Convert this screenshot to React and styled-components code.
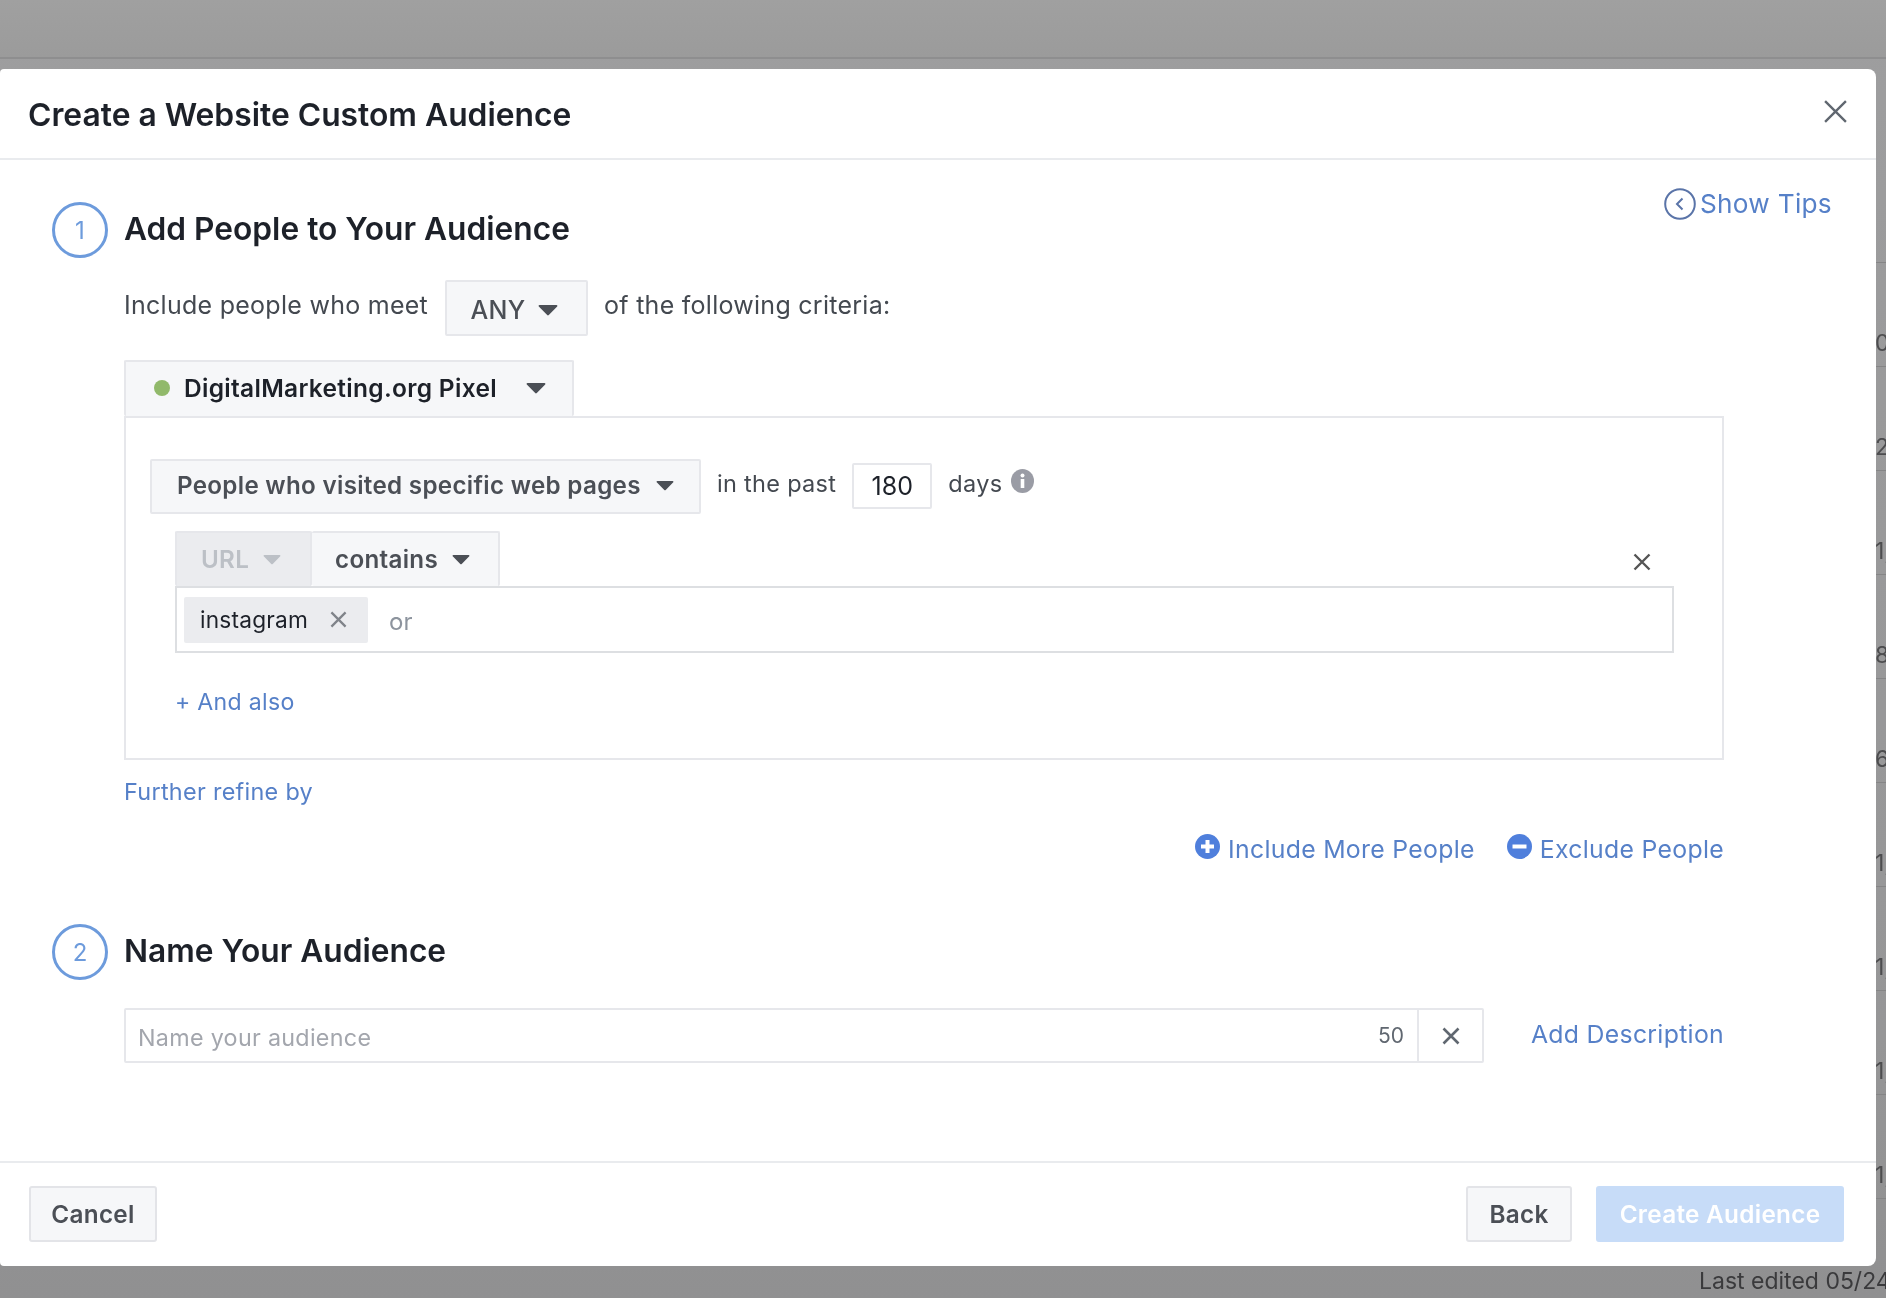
import React from 'react'
import styled, { createGlobalStyle } from 'styled-components'

const GlobalStyle = createGlobalStyle`
  html, body {
    margin: 0;
    padding: 0;
    background: #9a9a9b;
  }
  * { box-sizing: border-box; }
`

const rowValues = ['', '0,', '2,', '1,', '8,', '6,', '1,', '1,', '1,', '1,']

const Caret = ({ color = '#4b4f56', size = 20 }) => (
  <svg width={size} height={size * 0.6} viewBox='0 0 20 12'>
    <path d='M1.5 1h17c.8 0 1.2.9.7 1.5l-8.4 8.6c-.5.5-1.2.5-1.6 0L.8 2.5C.3 1.9.7 1 1.5 1z' fill={color} />
  </svg>
)

const Cross = ({ size = 18, color = '#606770', weight = 2.4 }) => (
  <svg width={size} height={size} viewBox='0 0 18 18'>
    <path d='M1.5 1.5l15 15M16.5 1.5l-15 15' stroke={color} strokeWidth={weight} fill='none' />
  </svg>
)

const App = () => (
  <Page>
    <GlobalStyle />
    <TopBar />
    <BackRows>
      {rowValues.map((value, i) => (
        <BackRow key={i}>{value}</BackRow>
      ))}
    </BackRows>
    <LastEdited>Last edited 05/24</LastEdited>

    <Modal>
      <Header>
        <Title>Create a Website Custom Audience</Title>
        <CloseButton>
          <Cross size={25} color='#606770' weight={1.7} />
        </CloseButton>
      </Header>

      <Body>
        <StepHead>
          <StepCircle>1</StepCircle>
          <StepTitle>Add People to Your Audience</StepTitle>
          <ShowTips>
            <svg width='32' height='32' viewBox='0 0 32 32'>
              <circle cx='16' cy='16' r='14.8' fill='none' stroke='#5a74a8' strokeWidth='2' />
              <path d='M18.5 10.5L13 16l5.5 5.5' fill='none' stroke='#5a74a8' strokeWidth='2' />
            </svg>
            Show Tips
          </ShowTips>
        </StepHead>

        <Content>
          <CriteriaRow>
            <span>Include people who meet</span>
            <AnyButton>
              ANY <Caret />
            </AnyButton>
            <span>of the following criteria:</span>
          </CriteriaRow>

          <PixelTab>
            <GreenDot />
            <span>DigitalMarketing.org Pixel</span>
            <Caret />
          </PixelTab>

          <Panel>
            <PeopleRow>
              <PeopleButton>
                <span>People who visited specific web pages</span>
                <Caret size={18} />
              </PeopleButton>
              <InlineText>in the past</InlineText>
              <DaysInput defaultValue='180' />
              <InlineText>days</InlineText>
              <InfoIcon viewBox='0 0 23 24' width='23' height='24'>
                <ellipse cx='11.5' cy='12' rx='11.5' ry='12' fill='#9a9ca5' />
                <circle cx='11.5' cy='6.5' r='2' fill='#fff' />
                <rect x='9.7' y='10' width='3.6' height='9' fill='#fff' />
              </InfoIcon>
            </PeopleRow>

            <Rule>
              <RuleTabs>
                <UrlTab>
                  URL <Caret color='#bcc0c6' size={18} />
                </UrlTab>
                <ContainsTab>
                  contains <Caret size={18} />
                </ContainsTab>
                <RuleRemove>
                  <Cross size={18} color='#555' weight={2.4} />
                </RuleRemove>
              </RuleTabs>
              <ValueBox>
                <Chip>
                  instagram
                  <Cross size={17} color='#7f8389' weight={2.4} />
                </Chip>
                <OrHint>or</OrHint>
              </ValueBox>
            </Rule>

            <AndAlso>+ And also</AndAlso>
          </Panel>

          <FurtherRefine>Further refine by</FurtherRefine>

          <Actions>
            <ActionLink>
              <svg width='25' height='25' viewBox='0 0 25 25'>
                <circle cx='12.5' cy='12.5' r='12.5' fill='#4f7fdc' />
                <path d='M12.5 6v13M6 12.5h13' stroke='#fff' strokeWidth='4' />
              </svg>
              Include More People
            </ActionLink>
            <ActionLink>
              <svg width='25' height='25' viewBox='0 0 25 25'>
                <circle cx='12.5' cy='12.5' r='12.5' fill='#4f7fdc' />
                <path d='M5.5 12.5h14' stroke='#fff' strokeWidth='4' />
              </svg>
              Exclude People
            </ActionLink>
          </Actions>
        </Content>

        <StepHead $second>
          <StepCircle>2</StepCircle>
          <StepTitle>Name Your Audience</StepTitle>
        </StepHead>

        <Content>
          <NameRow>
            <NameField>
              <NameInput placeholder='Name your audience' />
              <Counter>50</Counter>
              <NameClear>
                <Cross size={18} color='#606770' weight={2.6} />
              </NameClear>
            </NameField>
            <AddDescription>Add Description</AddDescription>
          </NameRow>
        </Content>
      </Body>

      <Footer>
        <Button $width='128px'>Cancel</Button>
        <FooterRight>
          <Button $width='106px'>Back</Button>
          <PrimaryButton>Create Audience</PrimaryButton>
        </FooterRight>
      </Footer>
    </Modal>
  </Page>
)

export default App

const Page = styled.div`
  position: relative;
  width: 1886px;
  height: 1298px;
  overflow: hidden;
  background: linear-gradient(#9e9e9f, #9a9a9b 30%, #969697 80%, #909091);
  font-family: Inter, 'Noto Sans', sans-serif;
  -webkit-font-smoothing: antialiased;
  filter: blur(0.5px);
`

const TopBar = styled.div`
  height: 59px;
  background: linear-gradient(#a0a0a0, #9b9b9b);
  border-bottom: 2px solid #8e8e8f;
`

const BackRows = styled.div`
  margin-top: 100px;
`

const BackRow = styled.div`
  height: 104px;
  padding: 65px 0 0 1875px;
  border-bottom: 1px solid #858586;
  color: #4d4d4f;
  font-size: 23px;
  line-height: 30px;
  white-space: nowrap;
`

const LastEdited = styled.div`
  position: absolute;
  left: 1699px;
  top: 1265px;
  color: #3a3a3c;
  font-size: 23px;
  line-height: 32px;
  white-space: nowrap;
`

const Modal = styled.div`
  position: absolute;
  top: 69px;
  left: 0;
  width: 1876px;
  height: 1197px;
  display: flex;
  flex-direction: column;
  background: #fff;
  border-radius: 4px 8px 8px 4px;
  color: #1d2129;
`

const Header = styled.div`
  height: 91px;
  flex-shrink: 0;
  display: flex;
  align-items: center;
  justify-content: space-between;
  padding: 0 28px;
  border-bottom: 2px solid #e9ebee;
`

const Title = styled.h1`
  margin: 2px 0 0;
  font-size: 31.8px;
  font-weight: 600;
  line-height: 40px;
  color: #1d2129;
`

const CloseButton = styled.div`
  display: flex;
  margin: 0 0 4px 0;
`

const Body = styled.div`
  flex: 1;
  padding: 42px 44px 0 52px;
`

const StepHead = styled.div`
  display: flex;
  align-items: center;
  gap: 16px;
  margin-top: ${p => (p.$second ? '60px' : '0')};
`

const StepCircle = styled.div`
  width: 56px;
  height: 56px;
  flex-shrink: 0;
  display: flex;
  align-items: center;
  justify-content: center;
  border: 3px solid #6d9bdc;
  border-radius: 50%;
  color: #6d9bdc;
  font-size: 24px;
`

const StepTitle = styled.h2`
  margin: 0 0 3px;
  font-size: 31.7px;
  font-weight: 600;
  line-height: 40px;
  color: #1d2129;
`

const LinkText = styled.span`
  color: #5680c8;
  font-size: 24.8px;
  letter-spacing: 0.3px;
  line-height: 30px;
  white-space: nowrap;
`

const ShowTips = styled(LinkText)`
  align-self: flex-start;
  margin: -14px 0 0 auto;
  display: flex;
  align-items: center;
  gap: 4px;
  font-size: 26.2px;
`

const Content = styled.div`
  margin: 0 108px 0 72px;
`

const CriteriaRow = styled.div`
  display: flex;
  align-items: flex-start;
  gap: 16.5px;
  margin-top: 22px;
  font-size: 25px;
  letter-spacing: 0.27px;
  line-height: 50px;
  color: #444950;
`

const SelectBase = styled.div`
  display: flex;
  align-items: center;
  height: 56px;
  background: #f6f7f9;
  border: 2px solid #e6e7eb;
  border-radius: 2px;
  color: #4b4f56;
  font-size: 24.2px;
  font-weight: 600;
  letter-spacing: 0.3px;
  white-space: nowrap;
`

const AnyButton = styled(SelectBase)`
  width: 143px;
  padding: 4px 0 0 24px;
  gap: 12px;
  font-size: 25px;
  font-weight: 500;
`

const PixelTab = styled(SelectBase)`
  width: 450px;
  margin-top: 24px;
  padding: 0 0 2px 28px;
  color: #1d2129;
  border-bottom: none;
  font-size: 24.5px;

  span {
    margin: 0 29px 0 14px;
  }
`

const GreenDot = styled.div`
  width: 16px;
  height: 16px;
  flex-shrink: 0;
  border-radius: 50%;
  background: #91b96b;
`

const Panel = styled.div`
  height: 344px;
  padding: 41px 0 0 24px;
  border: 2px solid #e6e7eb;
`

const PeopleRow = styled.div`
  display: flex;
  align-items: center;
  height: 55px;
`

const PeopleButton = styled(SelectBase)`
  width: 551px;
  height: 55px;
  padding: 0 0 2px 25px;
  gap: 15px;
`

const InlineText = styled.span`
  margin: -6px 16px 0 16px;
  font-size: 23.5px;
  letter-spacing: 0.3px;
  color: #444950;
  white-space: nowrap;
`

const DaysInput = styled.input`
  width: 80px;
  height: 46px;
  margin: -2px 0 0;
  padding: 0;
  text-align: center;
  border: 2px solid #e6e7eb;
  border-radius: 2px;
  background: #fff;
  color: #1d2129;
  font: 400 25px Inter, sans-serif;
  outline: none;
`

const InfoIcon = styled.svg`
  margin: -11px 0 0 -7px;
`

const Rule = styled.div`
  margin: 17px 48px 0 25px;
`

const RuleTabs = styled.div`
  display: flex;
  align-items: stretch;
  height: 55px;
`

const UrlTab = styled(SelectBase)`
  width: 137px;
  height: 55px;
  padding-left: 24px;
  gap: 14px;
  background: #ebecef;
  color: #bcc0c6;
  border-bottom: none;
`

const ContainsTab = styled(SelectBase)`
  width: 188px;
  height: 55px;
  padding-left: 23px;
  gap: 14px;
  border-left: none;
  border-bottom: none;
`

const RuleRemove = styled.div`
  display: flex;
  align-items: center;
  margin: 7px 23px 0 auto;
`

const ValueBox = styled.div`
  display: flex;
  align-items: center;
  height: 67px;
  padding-left: 7px;
  border: 2px solid #dddfe2;
  background: #fff;
`

const Chip = styled.div`
  display: flex;
  align-items: center;
  justify-content: space-between;
  width: 184px;
  height: 46px;
  padding: 0 21px 0 16px;
  background: #ebecef;
  border-radius: 2px;
  color: #1d2129;
  font-size: 22.7px;
  letter-spacing: 0.2px;
`

const OrHint = styled.span`
  margin: 4px 0 0 21px;
  color: #8d949e;
  font-size: 24px;
`

const AndAlso = styled(LinkText)`
  display: block;
  margin: 34px 0 0 25px;
  font-size: 23.1px;
`

const FurtherRefine = styled(LinkText)`
  display: block;
  margin-top: 17px;
  font-size: 23.4px;
`

const Actions = styled.div`
  display: flex;
  justify-content: flex-end;
  gap: 32px;
  margin-top: 27px;
`

const ActionLink = styled(LinkText)`
  display: flex;
  align-items: center;
  gap: 8px;

  svg {
    margin-top: -5px;
  }
`

const NameRow = styled.div`
  display: flex;
  align-items: center;
  justify-content: space-between;
  margin-top: 28px;
`

const AddDescription = styled(LinkText)`
  margin-top: -3px;
`

const NameField = styled.div`
  display: flex;
  align-items: center;
  width: 1360px;
  height: 55px;
  border: 2px solid #e6e7eb;
  border-radius: 2px;
`

const NameInput = styled.input`
  flex: 1;
  height: 100%;
  padding: 4px 0 0 12px;
  border: none;
  outline: none;
  background: transparent;
  font: 400 23.3px Inter, sans-serif;
  letter-spacing: 0.3px;
  color: #1d2129;

  &::placeholder {
    color: #a3a6ad;
    opacity: 1;
  }
`

const Counter = styled.span`
  margin-right: 13px;
  color: #606770;
  font-size: 21px;
`

const NameClear = styled.div`
  display: flex;
  align-items: center;
  justify-content: center;
  width: 65px;
  height: 100%;
  border-left: 2px solid #e6e7eb;
`

const Footer = styled.div`
  display: flex;
  justify-content: space-between;
  height: 105px;
  flex-shrink: 0;
  padding: 23px 32px 0 29px;
  border-top: 2px solid #e9ebee;
`

const FooterRight = styled.div`
  display: flex;
  gap: 24px;
`

const Button = styled.div`
  display: flex;
  align-items: center;
  justify-content: center;
  width: ${p => p.$width || 'auto'};
  height: 56px;
  background: #f6f7f9;
  border: 2px solid #e3e4e8;
  border-radius: 3px;
  color: #4b4f56;
  font-size: 24.3px;
  font-weight: 600;
  letter-spacing: 0.3px;
`

const PrimaryButton = styled(Button)`
  width: 248px;
  background: #c7dcf8;
  border-color: #c7dcf8;
  color: #fff;
`
